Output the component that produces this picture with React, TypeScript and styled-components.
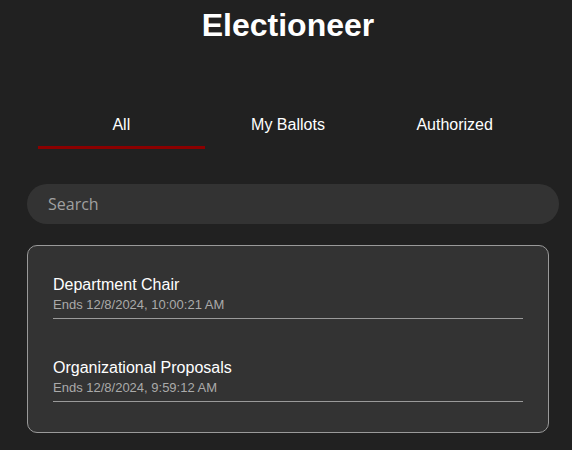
import { useState } from "react";
import styled, { createGlobalStyle } from "styled-components";

const GlobalStyle = createGlobalStyle`
  html, body {
    margin: 0;
    padding: 0;
    background: #212121;
  }
  body {
    font-family: "Liberation Sans", Arial, sans-serif;
    color: #ffffff;
  }
`;

const ballots = [
  { id: 1, title: "Department Chair", ends: "Ends 12/8/2024, 10:00:21 AM" },
  { id: 2, title: "Organizational Proposals", ends: "Ends 12/8/2024, 9:59:12 AM" },
];

const tabs = ["All", "My Ballots", "Authorized"];

const App = () => {
  const [active, setActive] = useState("All");

  return (
    <>
      <GlobalStyle />
      <Page>
        <Title>Electioneer</Title>
        <TabBar>
          {tabs.map((tab) => (
            <Tab key={tab} $active={tab === active} onClick={() => setActive(tab)}>
              {tab}
            </Tab>
          ))}
        </TabBar>
        <SearchInput placeholder="Search" />
        <BallotCard>
          <BallotList>
            {ballots.map((ballot) => (
              <BallotItem key={ballot.id}>
                <BallotName>{ballot.title}</BallotName>
                <BallotEnds>{ballot.ends}</BallotEnds>
              </BallotItem>
            ))}
          </BallotList>
        </BallotCard>
      </Page>
    </>
  );
};

export default App;

const Page = styled.div`
  width: 522px;
  margin-left: 27px;
  padding-top: 7px;
  display: flex;
  flex-direction: column;
  align-items: center;
`;

const Title = styled.h1`
  margin: 0;
  font-size: 32px;
  line-height: 37px;
  font-weight: 700;
`;

const TabBar = styled.nav`
  margin-top: 60px;
  width: 500px;
  display: grid;
  grid-template-columns: repeat(3, 1fr);
`;

const Tab = styled.button<{ $active: boolean }>`
  background: none;
  border: none;
  border-bottom: 3px solid ${({ $active }) => ($active ? "#8b0000" : "transparent")};
  padding: 12px 0;
  color: #ffffff;
  font-family: "Liberation Sans", Arial, sans-serif;
  font-size: 16px;
  line-height: 18px;
  cursor: pointer;
`;

const SearchInput = styled.input`
  align-self: flex-start;
  margin-top: 35px;
  box-sizing: border-box;
  width: 532px;
  height: 40px;
  padding: 0 21px;
  border: none;
  border-radius: 20px;
  background: #333333;
  color: #ffffff;
  font-family: "Open Sans", sans-serif;
  font-size: 16px;
  outline: none;

  &::placeholder {
    color: #a0a0a0;
  }
`;

const BallotCard = styled.section`
  align-self: stretch;
  margin-top: 21px;
  padding: 10px 25px 30px;
  background: #333333;
  border: 1px solid #9a9a9a;
  border-radius: 10px;
`;

const BallotList = styled.div`
  display: flex;
  flex-direction: column;
  gap: 20px;
`;

const BallotItem = styled.div`
  padding: 20px 0 6px;
  border-bottom: 1px solid #9a9a9a;
  cursor: pointer;
`;

const BallotName = styled.div`
  font-size: 16px;
  line-height: 18px;
  color: #ffffff;
`;

const BallotEnds = styled.div`
  margin-top: 3px;
  font-size: 13px;
  line-height: 15px;
  color: #aaaaaa;
`;
